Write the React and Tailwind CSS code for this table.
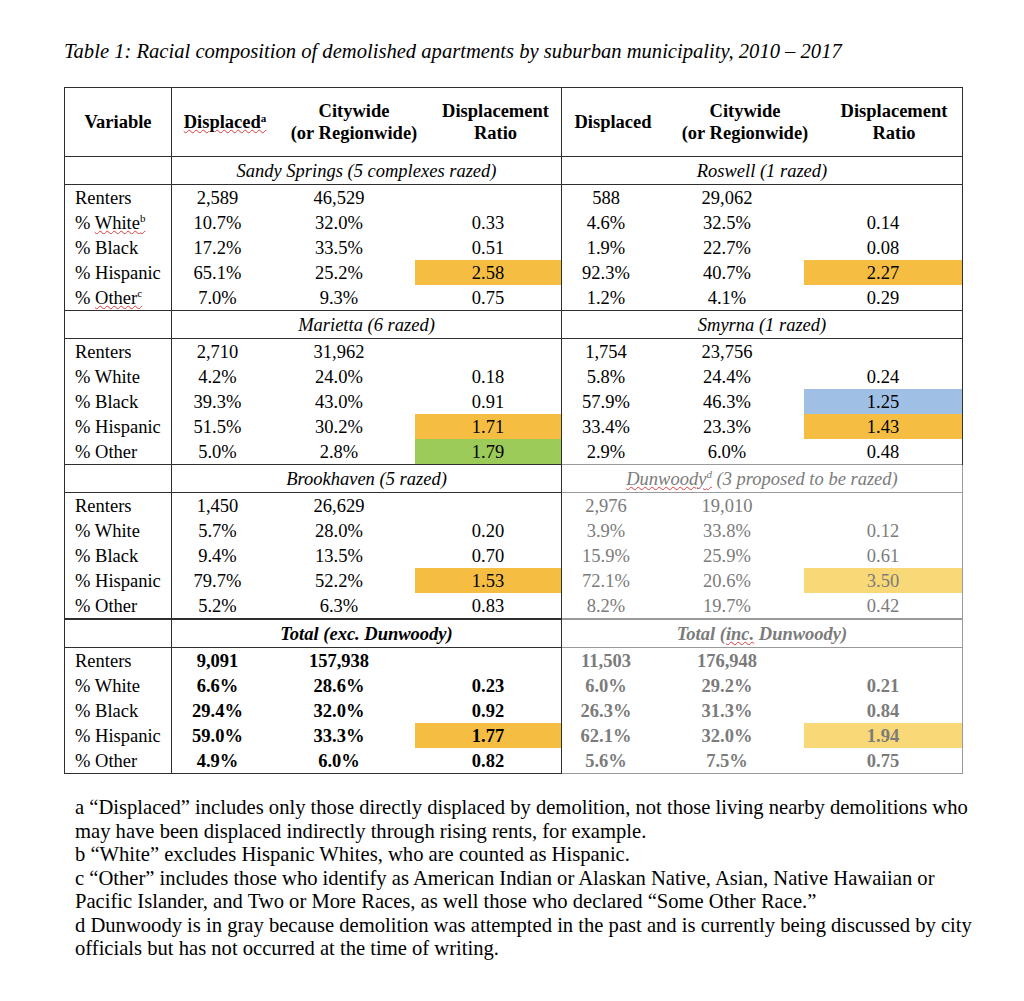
import React from "react";

const ORANGE = "bg-[#f5be42]";
const GREEN = "bg-[#9ccb5a]";
const BLUE = "bg-[#9fbfe4]";
const LYELLOW = "bg-[#f9d877]";

const Wavy = ({ children }) => (
  <span className="underline decoration-wavy decoration-[#e23b3b] decoration-1 underline-offset-[1px]">
    {children}
  </span>
);

const Sup = ({ children }) => <sup className="text-[11px] top-[-0.55em]">{children}</sup>;

const sections = [
  {
    leftTitle: <span>Sandy Springs (5 complexes razed)</span>,
    rightTitle: <span>Roswell (1 razed)</span>,
    rows: [
      [<span>Renters</span>, ["2,589", "46,529", ""], ["588", "29,062", ""]],
      [<span>% <Wavy>White<Sup>b</Sup></Wavy></span>, ["10.7%", "32.0%", "0.33"], ["4.6%", "32.5%", "0.14"]],
      [<span>% Black</span>, ["17.2%", "33.5%", "0.51"], ["1.9%", "22.7%", "0.08"]],
      [<span>% Hispanic</span>, ["65.1%", "25.2%", "2.58", ORANGE], ["92.3%", "40.7%", "2.27", ORANGE]],
      [<span>% <Wavy>Other<Sup>c</Sup></Wavy></span>, ["7.0%", "9.3%", "0.75"], ["1.2%", "4.1%", "0.29"]],
    ],
  },
  {
    leftTitle: <span>Marietta (6 razed)</span>,
    rightTitle: <span>Smyrna (1 razed)</span>,
    rows: [
      [<span>Renters</span>, ["2,710", "31,962", ""], ["1,754", "23,756", ""]],
      [<span>% White</span>, ["4.2%", "24.0%", "0.18"], ["5.8%", "24.4%", "0.24"]],
      [<span>% Black</span>, ["39.3%", "43.0%", "0.91"], ["57.9%", "46.3%", "1.25", BLUE]],
      [<span>% Hispanic</span>, ["51.5%", "30.2%", "1.71", ORANGE], ["33.4%", "23.3%", "1.43", ORANGE]],
      [<span>% Other</span>, ["5.0%", "2.8%", "1.79", GREEN], ["2.9%", "6.0%", "0.48"]],
    ],
  },
  {
    leftTitle: <span>Brookhaven (5 razed)</span>,
    rightTitle: (
      <span>
        <Wavy>Dunwoody<Sup>d</Sup></Wavy> (3 proposed to be razed)
      </span>
    ),
    rightGray: true,
    grayLines: true,
    thick: true,
    rows: [
      [<span>Renters</span>, ["1,450", "26,629", ""], ["2,976", "19,010", ""]],
      [<span>% White</span>, ["5.7%", "28.0%", "0.20"], ["3.9%", "33.8%", "0.12"]],
      [<span>% Black</span>, ["9.4%", "13.5%", "0.70"], ["15.9%", "25.9%", "0.61"]],
      [<span>% Hispanic</span>, ["79.7%", "52.2%", "1.53", ORANGE], ["72.1%", "20.6%", "3.50", LYELLOW]],
      [<span>% Other</span>, ["5.2%", "6.3%", "0.83"], ["8.2%", "19.7%", "0.42"]],
    ],
  },
  {
    leftTitle: <span className="font-bold">Total (exc. Dunwoody)</span>,
    rightTitle: (
      <span className="font-bold">
        Total (<Wavy>inc.</Wavy> Dunwoody)
      </span>
    ),
    rightGray: true,
    grayLines: true,
    bold: true,
    last: true,
    rows: [
      [<span>Renters</span>, ["9,091", "157,938", ""], ["11,503", "176,948", ""]],
      [<span>% White</span>, ["6.6%", "28.6%", "0.23"], ["6.0%", "29.2%", "0.21"]],
      [<span>% Black</span>, ["29.4%", "32.0%", "0.92"], ["26.3%", "31.3%", "0.84"]],
      [<span>% Hispanic</span>, ["59.0%", "33.3%", "1.77", ORANGE], ["62.1%", "32.0%", "1.94", LYELLOW]],
      [<span>% Other</span>, ["4.9%", "6.0%", "0.82"], ["5.6%", "7.5%", "0.75"]],
    ],
  },
];

function LeftCells({ v, bold }) {
  return (
    <div className={`flex h-full ${bold ? "font-bold" : ""}`}>
      <div className="w-[91px] flex items-center justify-center">{v[0]}</div>
      <div className="w-[152px] flex items-center justify-center">{v[1]}</div>
      <div className={`flex-1 flex items-center justify-center ${v[3] || ""}`}>{v[2]}</div>
    </div>
  );
}

function RightCells({ v, bold, gray }) {
  return (
    <div className={`flex h-full ${bold ? "font-bold" : ""} ${gray ? "text-[#7b7b7b]" : ""}`}>
      <div className="w-[88px] flex items-center justify-center">{v[0]}</div>
      <div className="w-[154px] flex items-center justify-center">{v[1]}</div>
      <div className={`flex-1 flex items-center justify-center ${v[3] || ""}`}>{v[2]}</div>
    </div>
  );
}

function Section({ s, nextGray }) {
  const lineL = s.thick ? "border-b-2 border-[#2e2e2e]" : s.last ? "" : "border-b border-[#2e2e2e]";
  const rightLine = s.grayLines ? "border-[#9a9a9a]" : "border-[#2e2e2e]";
  const bottomRight = nextGray ? "border-[#9a9a9a]" : rightLine;
  return (
    <div className="flex">
      <div className={`w-[107px] border-r border-[#2e2e2e] ${lineL}`}>
        <div className="h-[28px] border-b border-[#2e2e2e]" />
        {s.rows.map((r, i) => (
          <div key={i} className="h-[25px] flex items-center pl-[10px]">
            {r[0]}
          </div>
        ))}
      </div>
      <div className={`w-[390px] border-r border-[#2e2e2e] ${lineL}`}>
        <div className="h-[28px] border-b border-[#2e2e2e] flex items-center justify-center italic">
          {s.leftTitle}
        </div>
        {s.rows.map((r, i) => (
          <div key={i} className="h-[25px]">
            <LeftCells v={r[1]} bold={s.bold} />
          </div>
        ))}
      </div>
      <div className={`flex-1 ${s.last ? "" : s.thick ? `border-b-2 ${bottomRight}` : `border-b ${bottomRight}`}`}>
        <div
          className={`h-[28px] border-b ${rightLine} flex items-center justify-center italic ${
            s.rightGray ? "text-[#7b7b7b]" : ""
          }`}
        >
          {s.rightTitle}
        </div>
        {s.rows.map((r, i) => (
          <div key={i} className="h-[25px]">
            <RightCells v={r[2]} bold={s.bold} gray={s.rightGray} />
          </div>
        ))}
      </div>
    </div>
  );
}

export default function App() {
  return (
    <div
      className="w-[1024px] h-[1001px] bg-white text-black pt-[39px]"
      style={{ fontFamily: '"Liberation Serif", "Times New Roman", serif' }}
    >
      <div className="ml-[64px] italic text-[20.6px] leading-[24px] whitespace-nowrap">
        Table 1: Racial composition of demolished apartments by suburban municipality, 2010 – 2017
      </div>
      <div className="ml-[64px] mt-[24px] w-[899px] text-[18.5px] leading-[22px]">
        <div className="border-t border-l border-[#2e2e2e] relative">
          <div className="absolute right-0 top-0 h-[377px] w-px bg-[#2e2e2e]" />
          <div className="absolute right-0 top-[377px] bottom-0 w-px bg-[#9a9a9a]" />
          {/* Header */}
          <div className="flex h-[69px] border-b border-[#2e2e2e] font-bold">
            <div className="w-[107px] border-r border-[#2e2e2e] flex items-center justify-center">
              Variable
            </div>
            <div className="w-[390px] border-r border-[#2e2e2e] flex text-center">
              <div className="w-[106px] flex items-center justify-center">
                <Wavy>
                  Displaced<Sup>a</Sup>
                </Wavy>
              </div>
              <div className="w-[152px] flex flex-col items-center justify-center">
                <div>Citywide</div>
                <div>(or Regionwide)</div>
              </div>
              <div className="flex-1 flex flex-col items-center justify-center">
                <div>Displacement</div>
                <div>Ratio</div>
              </div>
            </div>
            <div className="flex-1 flex text-center pr-px">
              <div className="w-[102px] flex items-center justify-center">Displaced</div>
              <div className="w-[162px] flex flex-col items-center justify-center">
                <div>Citywide</div>
                <div>(or Regionwide)</div>
              </div>
              <div className="flex-1 flex flex-col items-center justify-center">
                <div>Displacement</div>
                <div>Ratio</div>
              </div>
            </div>
          </div>
          {sections.map((s, i) => (
            <div key={i} className="pr-px">
              <Section s={s} nextGray={i === 1} />
            </div>
          ))}
          <div className="flex h-px">
            <div className="w-[497px] bg-[#2e2e2e]" />
            <div className="flex-1 bg-[#9a9a9a]" />
          </div>
        </div>
      </div>
      <div className="ml-[75px] mt-[22px] text-[20.6px] leading-[23.5px] whitespace-nowrap">
        <div>a “Displaced” includes only those directly displaced by demolition, not those living nearby demolitions who</div>
        <div>may have been displaced indirectly through rising rents, for example.</div>
        <div>b “White” excludes Hispanic Whites, who are counted as Hispanic.</div>
        <div>c “Other” includes those who identify as American Indian or Alaskan Native, Asian, Native Hawaiian or</div>
        <div>Pacific Islander, and Two or More Races, as well those who declared “Some Other Race.”</div>
        <div>d Dunwoody is in gray because demolition was attempted in the past and is currently being discussed by city</div>
        <div>officials but has not occurred at the time of writing.</div>
      </div>
    </div>
  );
}
